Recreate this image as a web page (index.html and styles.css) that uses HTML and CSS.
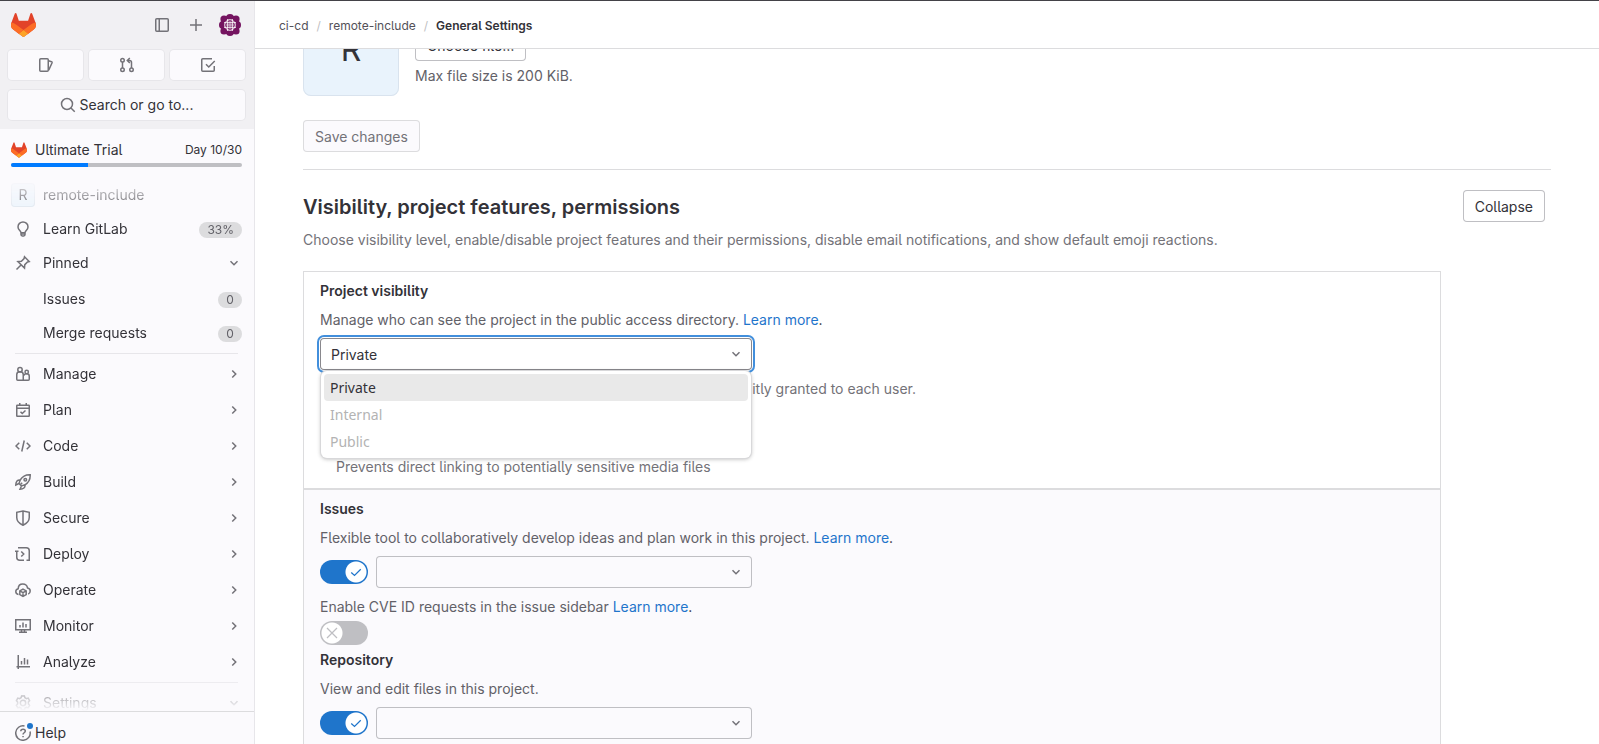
FILE: index.html
```html
<!DOCTYPE html>
<html lang="en">
<head>
<meta charset="utf-8">
<meta name="viewport" content="width=device-width, initial-scale=1">
<title>General Settings · remote-include · GitLab</title>
<link rel="stylesheet" href="styles.css">
</head>
<body>
<svg class="sprite" aria-hidden="true">
  <symbol id="tanuki" viewBox="0 0 25 24">
    <path fill="#e24329" d="m24.507 9.5-.034-.09L21.082.562a.896.896 0 0 0-1.694.091l-2.29 7.01H7.825L5.535.653a.898.898 0 0 0-1.694-.09L.451 9.411.416 9.5a6.297 6.297 0 0 0 2.09 7.278l.012.01.03.022 5.16 3.867 2.56 1.935 1.554 1.176a1.051 1.051 0 0 0 1.268 0l1.555-1.176 2.56-1.935 5.197-3.89.014-.01A6.297 6.297 0 0 0 24.507 9.5Z"/>
    <path fill="#fc6d26" d="m24.507 9.5-.034-.09a11.44 11.44 0 0 0-4.56 2.051l-7.447 5.632 4.742 3.584 5.197-3.89.014-.01A6.297 6.297 0 0 0 24.507 9.5Z"/>
    <path fill="#fca326" d="m7.707 20.677 2.56 1.935 1.555 1.176a1.051 1.051 0 0 0 1.268 0l1.555-1.176 2.56-1.935-4.743-3.584-4.755 3.584Z"/>
    <path fill="#fc6d26" d="M5.01 11.461a11.43 11.43 0 0 0-4.56-2.05L.416 9.5a6.297 6.297 0 0 0 2.09 7.278l.012.01.03.022 5.16 3.867 4.745-3.584-7.444-5.632Z"/>
  </symbol>
  <symbol id="panel" viewBox="0 0 16 16"><rect x="1.75" y="1.75" width="12.5" height="12.5" rx="1"/><path d="M5.25 2v12"/></symbol>
  <symbol id="plus" viewBox="0 0 16 16"><path d="M8 2v12M2 8h12"/></symbol>
  <symbol id="issues" viewBox="0 0 16 16"><rect x="1.75" y="1.75" width="8.5" height="12.5" rx="1"/><path d="m10.5 3.8 3 .9c.5.2.8.6.6 1.1l-3.4 7.3"/></symbol>
  <symbol id="merge" viewBox="0 0 16 16"><circle cx="3.5" cy="3.25" r="1.75"/><circle cx="3.5" cy="12.75" r="1.75"/><circle cx="12.5" cy="12.75" r="1.75"/><path d="M3.5 5v6M12.5 11V5.5A2 2 0 0 0 10.500 3.5H8.500M10.800 1 8.300 3.500l2.500 2.500"/></symbol>
  <symbol id="todo" viewBox="0 0 16 16"><path d="M12 1.750H2.750a1 1 0 0 0-1 1v10.500a1 1 0 0 0 1 1h10.500a1 1 0 0 0 1-1V9"/><path d="m6 7.250 2.750 2.750 6-6"/></symbol>
  <symbol id="search" viewBox="0 0 16 16"><circle cx="7" cy="7" r="5.500"/><path d="m11 11 3.750 3.750"/></symbol>
  <symbol id="bulb" viewBox="0 0 16 16"><path d="M6 11.500C6 9.500 3 8.600 3 5.600a5 5 0 0 1 10 0c0 3-3 3.900-3 5.900ZM6 11.500v1.800c0 .8.500 1.300 1.300 1.300h1.400c.8 0 1.300-.5 1.300-1.300v-1.800" transform="translate(0 .300)"/><path d="M6 13h4"/></symbol>
  <symbol id="pin" viewBox="0 0 16 16"><path d="m9.500 1.800 4.700 4.700-1.700.4-2.700 2.700-.3 3.500-6.600-6.600 3.500-.3 2.700-2.700ZM6.500 9.500l-5 5"/></symbol>
  <symbol id="manage" viewBox="0 0 16 16"><circle cx="5" cy="3.700" r="2.200"/><path d="M1.750 13.250V8.500c0-1.800 1.400-2.700 3.250-2.700s3.250.9 3.250 2.700v5.750h-5.500a1 1 0 0 1-1-1Z"/><circle cx="11.700" cy="6" r="1.700"/><path d="M8.250 14.250h5a1 1 0 0 0 1-1V10c0-1.500-1-2.300-2.500-2.300S9.250 8.300 8.500 9.500"/></symbol>
  <symbol id="plan" viewBox="0 0 16 16"><rect x="1.750" y="3.250" width="12.500" height="11" rx=".5"/><path d="M2 6.250h12M4.750 1v2M11.250 1v2M5.500 9.750l1.750 1.750 3.250-3"/></symbol>
  <symbol id="code" viewBox="0 0 16 16"><path d="M4.250 4.750 1 8l3.250 3.250M11.750 4.750 15 8l-3.250 3.250M9.250 2.500l-2.500 11"/></symbol>
  <symbol id="build" viewBox="0 0 16 16"><path d="M15.200.8c-4.500-.2-7.700 1.400-10 5.200L4 9.500 6.500 12l3.500-1.200c3.800-2.300 5.400-5.500 5.200-10ZM5.200 6C2.500 5.700.800 7.500.800 11L4 9.500M10 10.800c.3 2.700-1.500 4.400-5 4.400L6.500 12"/><circle cx="10.300" cy="5.700" r="1.300"/><path d="M7.200 8.800 5.500 10.500"/></symbol>
  <symbol id="secure" viewBox="0 0 16 16"><path d="M8 1 14.250 2.300v5.200c0 3.500-2.500 6-6.250 7.700-3.750-1.700-6.250-4.200-6.250-7.700V2.300L8 1ZM8 1v14"/></symbol>
  <symbol id="deploy" viewBox="0 0 16 16"><path d="M3 1.750h8.250a3 3 0 0 1 3 3V11M1.750 4.500v6.750a3 3 0 0 0 3 3H9M0 5.250h3.500M14.250 11v3.250H11.500M6.250 5.500 8.750 8l-2.500 2.500"/></symbol>
  <symbol id="operate" viewBox="0 0 16 16"><path d="M3.500 12.500C1.800 12.300.8 11.200.8 9.600c0-1.500 1-2.600 2.400-2.900C3.300 3.900 5.200 2 7.800 2c2.400 0 4.300 1.600 4.700 3.900 1.600.2 2.700 1.400 2.700 3.100 0 1.500-.7 2.600-2 3.100"/><path d="m8 7.200 3.200 1.700v3.700L8 14.300l-3.200-1.700V8.900L8 7.200ZM4.800 8.900 8 10.600l3.200-1.700M8 10.600v3.700"/></symbol>
  <symbol id="monitor" viewBox="0 0 16 16"><path d="M.750 1.750h14.500v10H.750zM4 14.250h8M6.500 12v2M9.500 12v2M5 7v2.500M8 4.500v5M11 6v3.500"/></symbol>
  <symbol id="analyze" viewBox="0 0 16 16"><path d="M3.250 1v14M1.500 12.750H15M6.500 7v3.500M9.500 4v6.500M12.500 5.500v5"/></symbol>
  <symbol id="settings" viewBox="0 0 16 16"><path d="m6.600 1-.5 1.700-1.500.9-1.800-.5L1.400 5.600 2.600 7v2l-1.200 1.400 1.400 2.500 1.800-.5 1.500.9.500 1.700h2.800l.5-1.700 1.500-.9 1.800.5 1.400-2.500L13.400 9V7l1.200-1.400-1.400-2.500-1.800.5-1.500-.9L9.400 1H6.600Z"/><circle cx="8" cy="8" r="2.700"/></symbol>
  <symbol id="help" viewBox="0 0 16 16"><path d="M9.500.950A7.250 7.250 0 1 0 15.050 6.500"/><path d="M5.800 6.300c0-1.300 1-2.100 2.300-2.100s2.200.8 2.200 1.900c0 1.700-2.250 1.600-2.250 3.400"/><path d="M8.050 10.900v1.400"/></symbol>
  <symbol id="down" viewBox="0 0 16 16"><path d="M4.500 6.250 8 9.750l3.500-3.500"/></symbol>
  <symbol id="right" viewBox="0 0 16 16"><path d="M6.250 4.500 9.750 8l-3.500 3.500"/></symbol>
  <symbol id="check" viewBox="0 0 16 16"><path d="m3.250 8.500 3.250 3 6.250-6.250"/></symbol>
  <symbol id="cross" viewBox="0 0 16 16"><path d="m3 3 10 10M13 3 3 13"/></symbol>
  <symbol id="identicon" viewBox="0 0 24 24">
    <g fill="#74135f"><circle cx="12" cy="12" r="9.500"/><circle cx="12" cy="5" r="4"/><circle cx="12" cy="19" r="4"/><circle cx="5" cy="12" r="4"/><circle cx="19" cy="12" r="4"/><circle cx="6" cy="6" r="3.600"/><circle cx="18" cy="6" r="3.600"/><circle cx="6" cy="18" r="3.600"/><circle cx="18" cy="18" r="3.600"/></g>
    <g fill="none" stroke="#fff" stroke-width=".9"><path d="M9.700 6v12M14.300 6v12M6 9.700h12M6 14.300h12"/><circle cx="12" cy="12" r="5.300"/><path d="M12 8v8M8 12h8" stroke-width=".7"/></g>
  </symbol>
</svg>

<div class="app">
  <aside class="sidebar">
    <div class="top">
      <div class="brand">
        <a class="logo" href="#" aria-label="Homepage"><svg class="logo-art"><use href="#tanuki"/></svg></a>
        <button class="bare" aria-label="Hide sidebar"><svg class="icon"><use href="#panel"/></svg></button>
        <button class="bare" aria-label="Create new"><svg class="icon"><use href="#plus"/></svg></button>
        <button class="bare" aria-label="User menu"><svg class="face"><use href="#identicon"/></svg></button>
      </div>
      <div class="counts">
        <a class="tile" href="#" aria-label="Issues"><svg class="icon"><use href="#issues"/></svg></a>
        <a class="tile" href="#" aria-label="Merge requests"><svg class="icon"><use href="#merge"/></svg></a>
        <a class="tile" href="#" aria-label="To-Do List"><svg class="icon"><use href="#todo"/></svg></a>
      </div>
      <button class="tile"><svg class="icon"><use href="#search"/></svg>Search or go to...</button>
    </div>
    <div class="trial">
      <div class="trial-row">
        <svg class="trial-logo"><use href="#tanuki"/></svg>
        <span class="trial-name">Ultimate Trial</span>
        <span class="trial-day">Day 10/30</span>
      </div>
      <div class="bar"><div class="bar-fill" style="width:33.33%"></div></div>
    </div>
    <nav class="scroll" aria-label="Project navigation">
      <a class="item project" href="#"><span class="avatar-s">R</span><span class="label">remote-include</span></a>
      <a class="item" href="#"><svg class="icon"><use href="#bulb"/></svg><span class="label">Learn GitLab</span><span class="badge">33%</span></a>
      <button class="item"><svg class="icon"><use href="#pin"/></svg><span class="label">Pinned</span><svg class="icon"><use href="#down"/></svg></button>
      <div class="group">
        <a class="item sub" href="#"><span class="label">Issues</span><span class="badge">0</span></a>
        <a class="item sub" href="#"><span class="label">Merge requests</span><span class="badge">0</span></a>
      </div>
      <div class="group sections">
        <button class="item"><svg class="icon"><use href="#manage"/></svg><span class="label">Manage</span><svg class="icon"><use href="#right"/></svg></button>
        <button class="item"><svg class="icon"><use href="#plan"/></svg><span class="label">Plan</span><svg class="icon"><use href="#right"/></svg></button>
        <button class="item"><svg class="icon"><use href="#code"/></svg><span class="label">Code</span><svg class="icon"><use href="#right"/></svg></button>
        <button class="item"><svg class="icon"><use href="#build"/></svg><span class="label">Build</span><svg class="icon"><use href="#right"/></svg></button>
        <button class="item"><svg class="icon"><use href="#secure"/></svg><span class="label">Secure</span><svg class="icon"><use href="#right"/></svg></button>
        <button class="item"><svg class="icon"><use href="#deploy"/></svg><span class="label">Deploy</span><svg class="icon"><use href="#right"/></svg></button>
        <button class="item"><svg class="icon"><use href="#operate"/></svg><span class="label">Operate</span><svg class="icon"><use href="#right"/></svg></button>
        <button class="item"><svg class="icon"><use href="#monitor"/></svg><span class="label">Monitor</span><svg class="icon"><use href="#right"/></svg></button>
        <button class="item"><svg class="icon"><use href="#analyze"/></svg><span class="label">Analyze</span><svg class="icon"><use href="#right"/></svg></button>
      </div>
      <div class="group sections">
        <button class="item"><svg class="icon"><use href="#settings"/></svg><span class="label">Settings</span><svg class="icon"><use href="#down"/></svg></button>
      </div>
    </nav>
    <div class="foot">
      <button class="help"><span class="help-icon"><svg class="icon"><use href="#help"/></svg><span class="dot"></span></span>Help</button>
    </div>
  </aside>

  <div class="page">
    <header class="crumbs">
      <nav aria-label="Breadcrumb">
        <ol class="trail">
          <li><a href="#">ci-cd</a></li>
          <li><a href="#">remote-include</a></li>
          <li><a class="here" href="#" aria-current="page">General Settings</a></li>
        </ol>
      </nav>
    </header>
    <main class="content">
      <section class="naming">
        <div class="avatar-row">
          <div class="avatar-l">R</div>
          <div class="upload">
            <button class="btn">Choose file…</button>
            <p class="note">Max file size is 200 KiB.</p>
          </div>
        </div>
        <button class="btn disabled" disabled>Save changes</button>
      </section>
      <section class="visibility">
        <div class="head">
          <h2 class="title">Visibility, project features, permissions</h2>
          <button class="btn">Collapse</button>
        </div>
        <p class="lead">Choose visibility level, enable/disable project features and their permissions, disable email notifications, and show default emoji reactions.</p>
        <div class="panel">
          <div class="block">
            <label class="name" for="vis">Project visibility</label>
            <p class="note">Manage who can see the project in the public access directory. <a class="link" href="#">Learn more</a><span class="stop">.</span></p>
            <div class="picker">
              <div class="select focus">
                <select id="vis"><option>Private</option><option disabled>Internal</option><option disabled>Public</option></select>
                <svg class="icon"><use href="#down"/></svg>
              </div>
              <div class="menu" role="listbox" aria-label="Project visibility">
                <div class="opt on" role="option" aria-selected="true">Private</div>
                <div class="opt" role="option" aria-disabled="true">Internal</div>
                <div class="opt" role="option" aria-disabled="true">Public</div>
              </div>
            </div>
            <p class="hint">Only accessible by project members. Membership must be explicitly granted to each user.</p>
            <p class="hint media">Prevents direct linking to potentially sensitive media files</p>
          </div>
          <div class="block shaded">
            <h3 class="name">Issues</h3>
            <p class="note">Flexible tool to collaboratively develop ideas and plan work in this project. <a class="link" href="#">Learn more</a><span class="stop">.</span></p>
            <div class="control">
              <label class="toggle"><input type="checkbox" role="switch" aria-label="Issues" checked><svg class="mark"><use href="#check"/></svg></label>
              <div class="select"><select aria-label="Issues access"></select><svg class="icon"><use href="#down"/></svg></div>
            </div>
            <p class="note cve">Enable CVE ID requests in the issue sidebar <a class="link" href="#">Learn more</a><span class="stop">.</span></p>
            <label class="toggle"><input type="checkbox" role="switch" aria-label="Enable CVE ID requests"><svg class="mark"><use href="#cross"/></svg></label>
            <h3 class="name repo">Repository</h3>
            <p class="note">View and edit files in this project.</p>
            <div class="control">
              <label class="toggle"><input type="checkbox" role="switch" aria-label="Repository" checked><svg class="mark"><use href="#check"/></svg></label>
              <div class="select"><select aria-label="Repository access"></select><svg class="icon"><use href="#down"/></svg></div>
            </div>
          </div>
        </div>
      </section>
    </main>
  </div>
</div>
</body>
</html>
```
FILE: styles.css
```css
*, *::before, *::after { box-sizing: border-box; }
body {
  margin: 0;
  height: 100vh;
  overflow: hidden;
  font: 14px/20px Inter, "Liberation Sans", sans-serif;
  font-feature-settings: "cv05";
  color: #333238;
  background: #fff;
}
button, select { font: inherit; font-feature-settings: inherit; color: inherit; }
button { border: 0; padding: 0; background: none; cursor: pointer; }
a { color: inherit; text-decoration: none; }
p, h2, h3, ol { margin: 0; }
.sprite { position: absolute; width: 0; height: 0; }
.icon, .mark {
  width: 16px;
  height: 16px;
  flex: none;
  fill: none;
  stroke: #737278;
  stroke-width: 1.5;
}

.app {
  display: flex;
  height: 100vh;
  border-top: 1px solid #434247;
}

/* Sidebar */
.sidebar {
  width: 255px;
  flex: none;
  display: flex;
  flex-direction: column;
  background: #fbfafd;
  border-right: 1px solid #e7e6ea;
}
.top { padding: 8px 9px 9px 8px; background: #f1f0f3; }
.brand { display: flex; align-items: center; height: 32px; padding-left: 3px; margin: 0 -1px 9px 0; }
.logo { flex: 1; display: flex; }
.logo-art { width: 25px; height: 24px; }
.bare { width: 32px; height: 32px; margin-left: 2px; display: grid; place-items: center; }
.face { width: 24px; height: 24px; }
.counts { display: grid; grid-template-columns: repeat(3, 1fr); gap: 6px; margin-bottom: 10px; }
.tile {
  display: flex;
  align-items: center;
  justify-content: center;
  gap: 4px;
  width: 100%;
  height: 30px;
  background: #fbfafd;
  border-radius: 4px;
  box-shadow: 0 0 0 1px #e7e6ea;
}
.trial { padding: 11px 12px 11px 11px; }
.trial-row { display: flex; align-items: center; gap: 8px; height: 20px; }
.trial-logo { width: 16px; height: 16px; }
.trial-name { flex: 1; }
.trial-day { font-size: 12px; }
.bar { height: 4px; margin-top: 3px; border-radius: 2px; background: #bfbfc3; overflow: hidden; }
.bar-fill { height: 4px; background: #007bff; }
.scroll {
  flex: 1;
  min-height: 0;
  overflow: hidden;
  padding-top: 1px;
  display: flex;
  flex-direction: column;
  gap: 2px;
  -webkit-mask-image: linear-gradient(transparent, #000 40px, #000 calc(100% - 40px), transparent);
  mask-image: linear-gradient(transparent, #000 40px, #000 calc(100% - 40px), transparent);
}
.item {
  display: flex;
  align-items: center;
  gap: 12px;
  flex: none;
  height: 32px;
  padding: 0 12px 0 15px;
  text-align: left;
}
.label { flex: 1; }
.project { padding-left: 11px; gap: 8px; }
.sub { padding-left: 43px; }
.avatar-s {
  width: 24px;
  height: 24px;
  border-radius: 4px;
  background: #e9f3fc;
  box-shadow: inset 0 0 0 1px #dbe3ec;
  text-align: center;
  line-height: 24px;
}
.badge {
  min-width: 24px;
  height: 16px;
  margin-top: 2px;
  padding: 0 8px;
  border-radius: 8px;
  background: #dcdcde;
  color: #626168;
  font-size: 12px;
  line-height: 16px;
  text-align: center;
}
.group { display: flex; flex-direction: column; gap: 2px; flex: none; padding-top: 2px; }
.sections { gap: 4px; padding-top: 0; }
.sections::before {
  content: "";
  height: 1px;
  margin: 2px 16px 0 15px;
  background: #e7e6ea;
}
.foot { border-top: 1px solid #dcdcde; padding: 11px 15px 1px; }
.help { display: flex; align-items: center; gap: 4px; height: 20px; }
.help-icon { position: relative; display: flex; }
.dot {
  position: absolute;
  top: -2px;
  right: -2px;
  width: 6px;
  height: 6px;
  border-radius: 50%;
  background: #1f75cb;
  box-shadow: 0 0 0 1px #fbfafd;
}

/* Page */
.page { flex: 1; min-width: 0; overflow: hidden; }
.crumbs {
  position: relative;
  z-index: 1;
  display: flex;
  align-items: center;
  height: 48px;
  padding: 2px 24px 0;
  background: #fff;
  border-bottom: 1px solid #dcdcde;
}
.trail { display: flex; padding: 0; list-style: none; font-size: 12px; line-height: 16px; color: #535158; }
.trail li + li::before { content: "/"; margin: 0 8px; color: #bfbfc3; }
.here { font-weight: 600; color: #333238; }
.content { margin-top: -49px; padding: 0 48px; }
.naming { padding-bottom: 17px; border-bottom: 1px solid #dcdcde; }
.avatar-row { display: flex; align-items: flex-end; gap: 16px; margin-bottom: 24px; }
.avatar-l {
  width: 96px;
  height: 96px;
  padding-top: 2px;
  border-radius: 8px;
  background: #e9f3fc;
  box-shadow: inset 0 0 0 1px #d9e3ee;
  font-size: 32px;
  line-height: 96px;
  text-align: center;
}
.upload { padding-bottom: 10px; }
.upload .note { margin-top: 5px; }
.btn {
  height: 32px;
  padding: 2px 12px 0;
  border-radius: 4px;
  background: #fff;
  box-shadow: inset 0 0 0 1px #bfbfc3;
}
.disabled { background: #fbfafd; color: #737278; box-shadow: inset 0 0 0 1px #dcdcde; cursor: default; }
.visibility { padding-top: 20px; }
.head { display: flex; justify-content: space-between; align-items: center; padding-right: 6px; }
.title { padding-top: 2px; font-size: 20px; line-height: 24px; font-weight: 600; }
.lead { margin-top: 8px; color: #737278; }
.panel { max-width: 1138px; margin-top: 21px; border: 1px solid #dcdcde; }
.block { padding: 9px 16px 11px; }
.shaded { background: #fbfafd; border-top: 2px solid #dcdcde; }
.name { display: block; margin: 0; font-size: 14px; line-height: 20px; font-weight: 600; }
.note { margin-top: 9px; color: #626168; }
.link { color: #1f75cb; }
.stop { color: #333238; }
.picker { position: relative; width: 432px; margin-top: 8px; }
.select { display: grid; align-items: center; flex: 1; }
.select select, .select .icon { grid-area: 1 / 1; }
.select .icon { justify-self: end; margin-right: 8px; pointer-events: none; }
.select select {
  appearance: none;
  width: 100%;
  height: 32px;
  margin: 0;
  padding: 2px 12px 0 11px;
  border: 0;
  border-radius: 4px;
  background: transparent;
  box-shadow: inset 0 0 0 1px #bfbfc3;
  outline: 0;
}
.focus select { background: #fff; box-shadow: inset 0 0 0 1px #89888d, 0 0 0 1px #fff, 0 0 0 3px #428fdc; }
.menu {
  position: absolute;
  z-index: 1;
  top: 33px;
  left: 1px;
  right: 1px;
  padding: 3px;
  border-radius: 6px;
  background: #fff;
  box-shadow: 0 0 0 1px #d8d8da, 0 1px 4px rgba(0, 0, 0, .3);
  font-family: "Noto Sans", sans-serif;
}
.opt { height: 27px; padding: 0 6px; border-radius: 4px; line-height: 27px; color: #b3b3b3; }
.on { background: #e9e9e9; color: #333238; }
.hint { color: #737278; margin-top: 9px; }
.media { margin-top: 58px; padding-left: 16px; }
.control { display: flex; align-items: center; gap: 8px; width: 432px; margin-top: 8px; }
.cve { margin-bottom: 4px; }
.toggle { display: grid; align-items: center; width: 48px; height: 24px; }
.toggle input, .toggle .mark { grid-area: 1 / 1; }
.toggle input {
  appearance: none;
  width: 48px;
  height: 24px;
  margin: 0;
  border-radius: 12px;
  background: radial-gradient(circle at 12px 12px, #fff 10px, transparent 11px) #bfbfc3;
}
.toggle input:checked { background: radial-gradient(circle at 36px 12px, #fff 10px, transparent 11px) #1f75cb; }
.mark { justify-self: start; margin-left: 4px; stroke: #bfbfc3; stroke-width: 1.25; pointer-events: none; }
.toggle input:checked + .mark { justify-self: end; margin: 0 4px 0 0; stroke: #1f75cb; }
.repo { margin-top: 5px; }
```
